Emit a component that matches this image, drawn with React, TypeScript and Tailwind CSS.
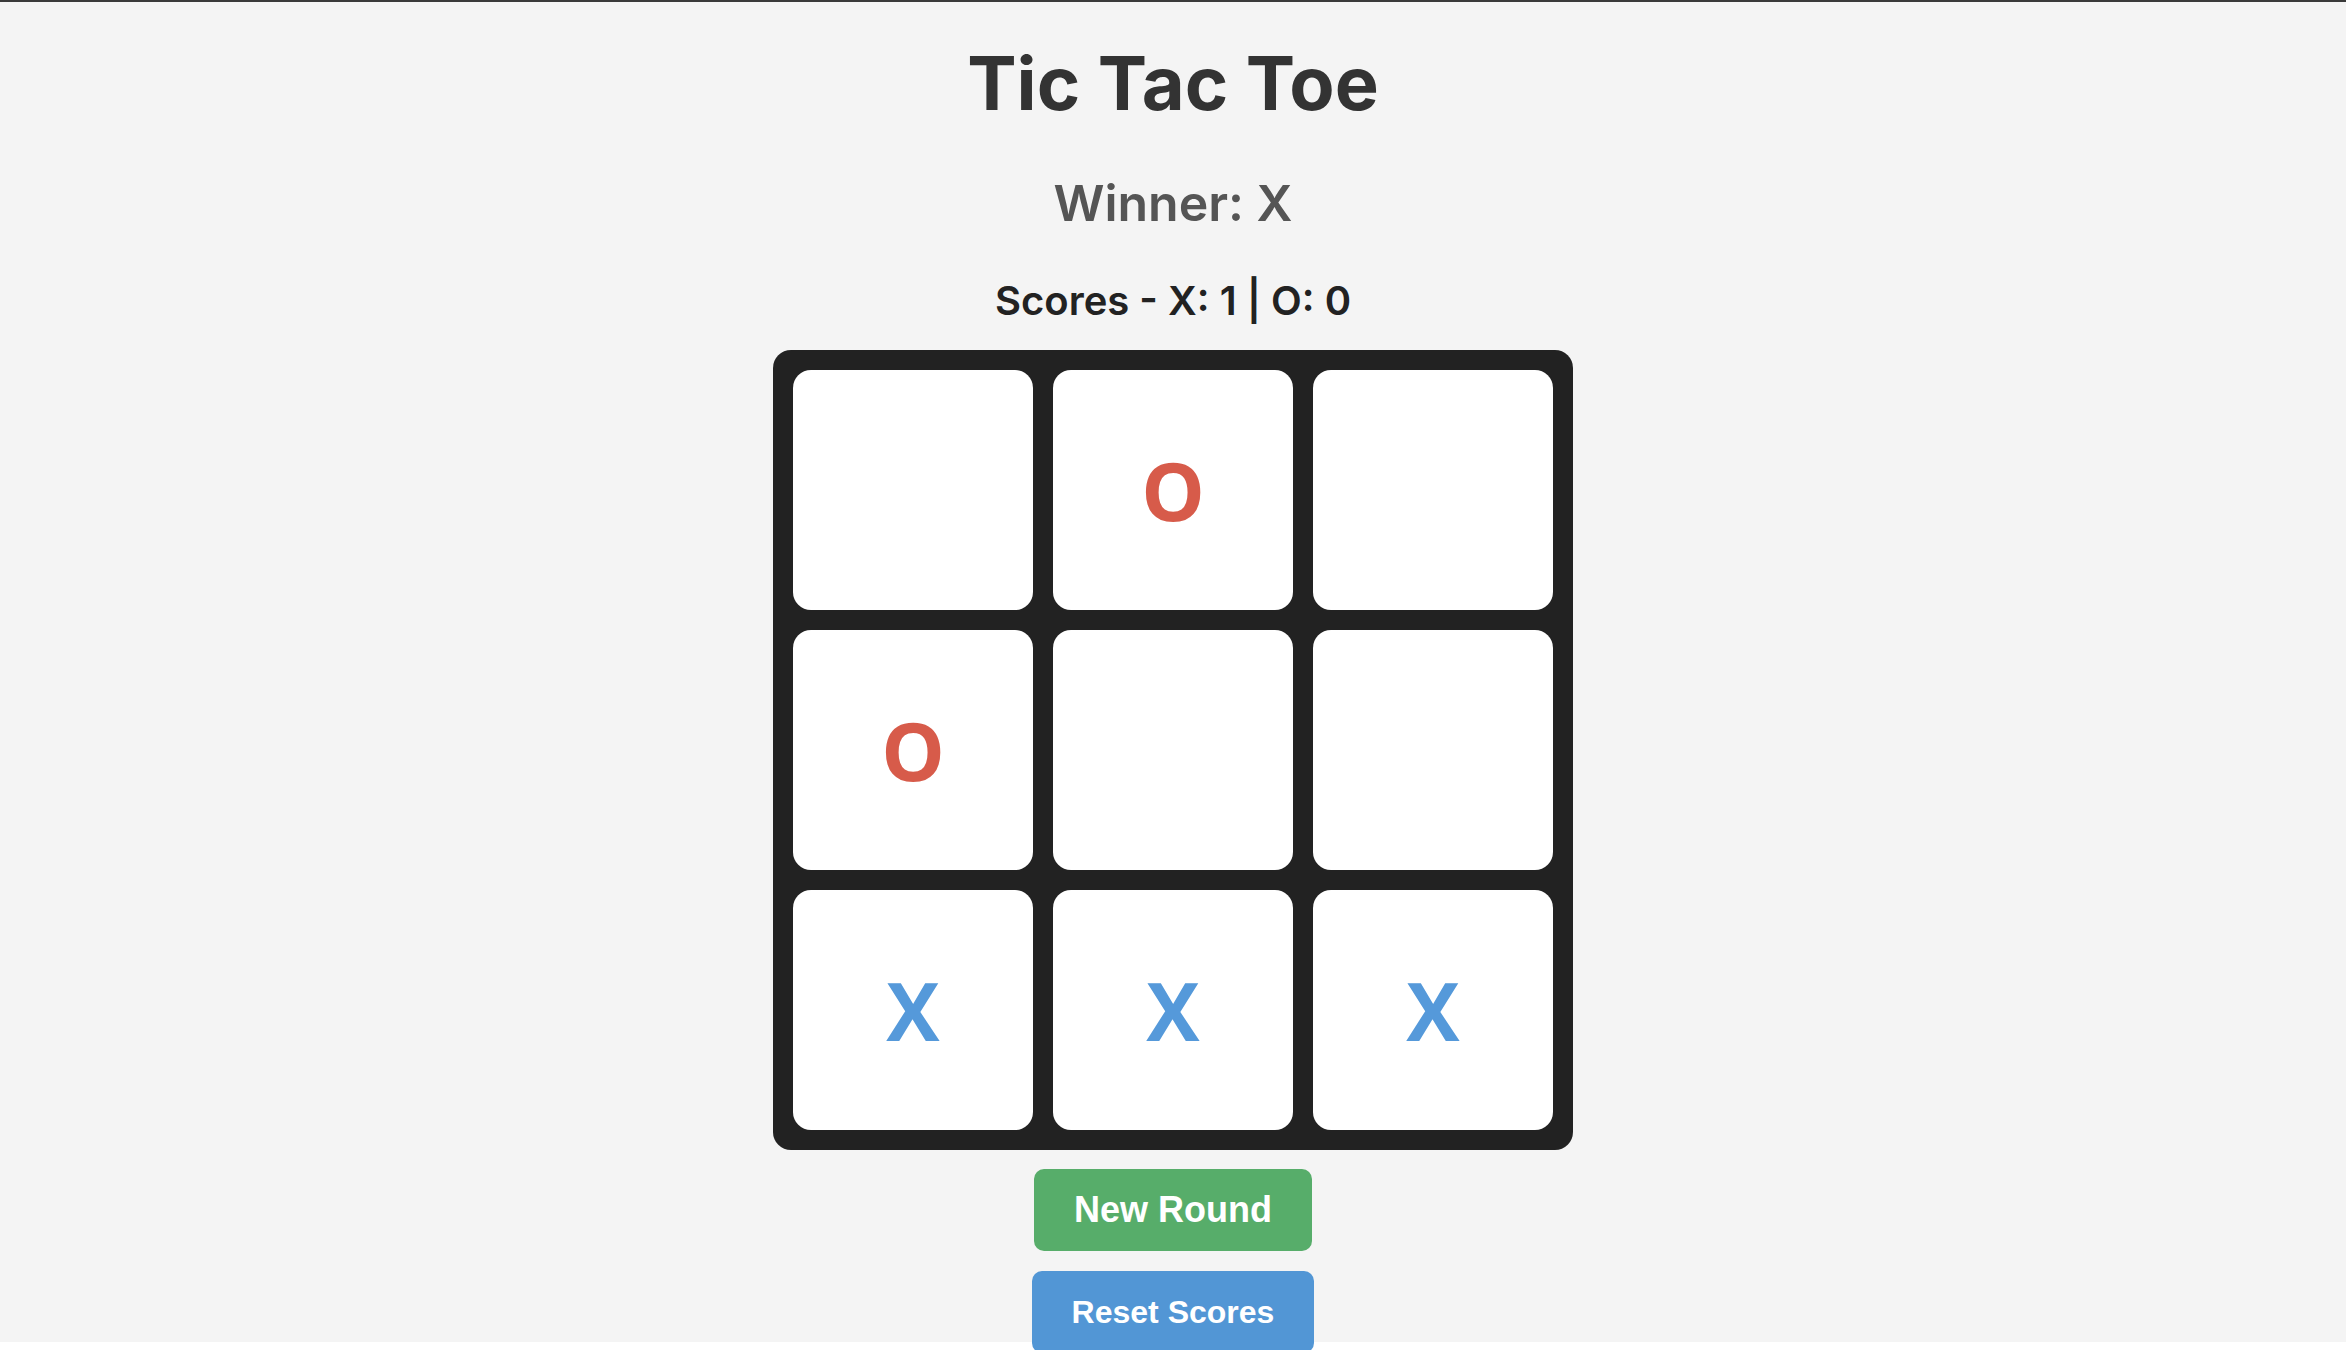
import React from "react";

const board: (string | null)[] = [null, "O", null, "O", null, null, "X", "X", "X"];

export default function App() {
  return (
    <div className="w-full min-h-[1350px] bg-white">
      <div className="h-[1342px] bg-[#f4f4f4] border-t-2 border-[#3a3a3a] flex flex-col items-center font-['Inter',sans-serif]">
        <h1 className="mt-[44px] text-[74px] leading-none font-bold text-[#333333]">Tic Tac Toe</h1>
        <div className="mt-[58px] text-[50px] leading-none font-semibold text-[#555555]">Winner: X</div>
        <div className="mt-[53px] text-[40px] leading-none font-semibold text-[#222222]">Scores - X: 1 | O: 0</div>
        <div className="mt-[29px] bg-[#222222] rounded-[18px] p-[20px] grid grid-cols-[240px_240px_240px] gap-[20px]">
          {board.map((v, i) => (
            <div
              key={i}
              className={`w-[240px] h-[240px] bg-white rounded-[18px] flex items-center justify-center text-[80px] font-bold font-['Open_Sans',sans-serif] ${
                v === "X" ? "text-[#5599da]" : "text-[#d75b4a]"
              }`}
            >
              {v}
            </div>
          ))}
        </div>
        <button className="mt-[19px] w-[278px] h-[82px] rounded-[10px] bg-[#57ad6a] text-white text-[36px] font-bold flex items-center justify-center shrink-0 font-['Liberation_Sans',Arial,sans-serif]">
          New Round
        </button>
        <button className="mt-[20px] w-[282px] h-[82px] rounded-[10px] bg-[#5296d5] text-white text-[32px] font-bold flex items-center justify-center shrink-0 font-['Liberation_Sans',Arial,sans-serif]">
          Reset Scores
        </button>
      </div>
    </div>
  );
}
